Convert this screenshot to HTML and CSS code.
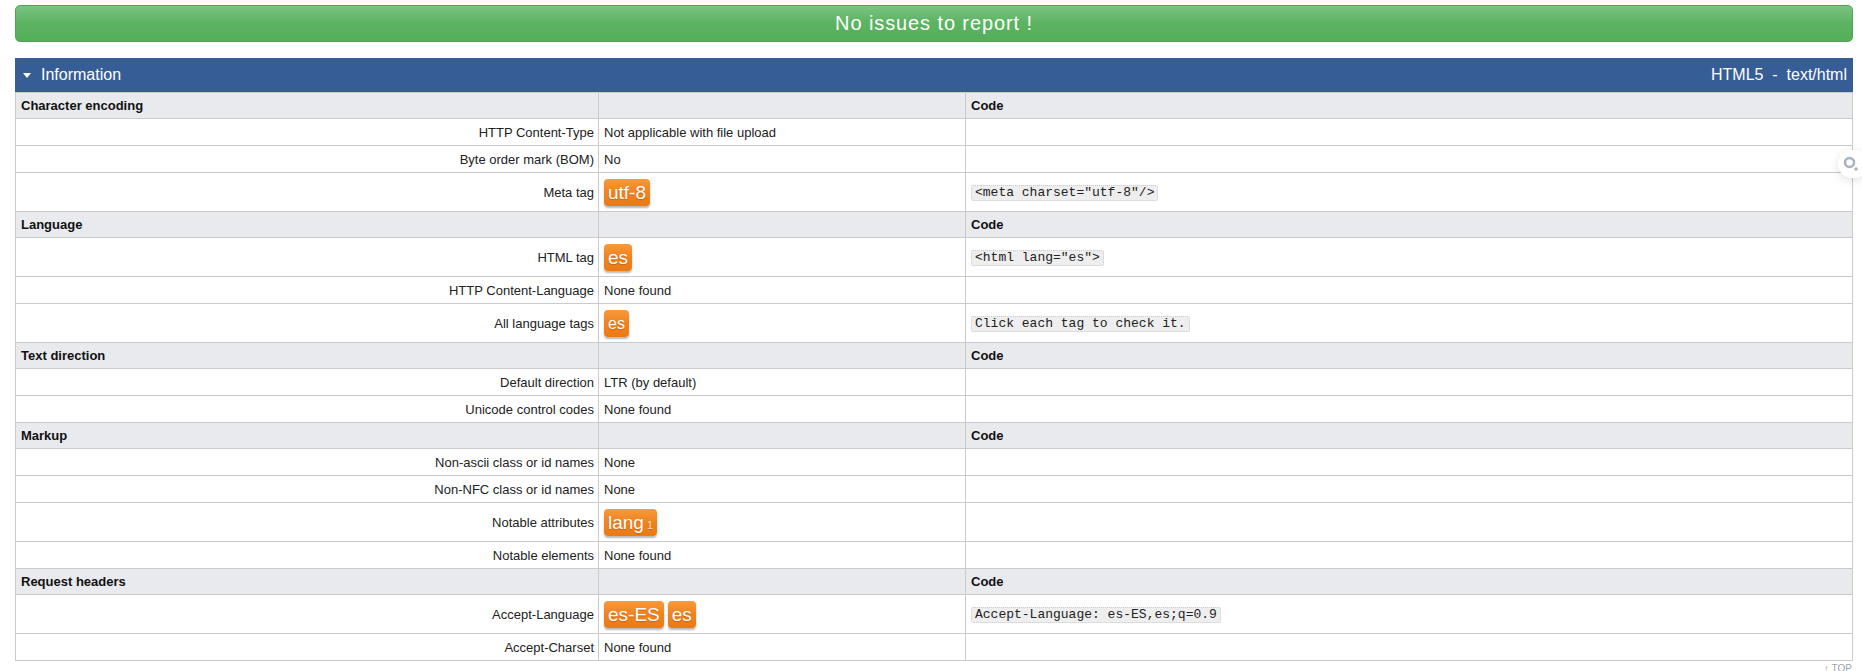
FILE: index.html
```html
<!DOCTYPE html>
<html lang="en">
<head>
<meta charset="utf-8">
<title>Internationalization checker</title>
<link rel="stylesheet" href="styles.css">
</head>
<body>
<div class="page">
  <div class="status">No issues to report !</div>

  <div class="panel-head">
    <span class="panel-title"><span class="caret"></span>Information</span>
    <span class="panel-meta">HTML5 &nbsp;-&nbsp; text/html</span>
  </div>

  <table class="info">
    <colgroup>
      <col class="c-label">
      <col class="c-value">
      <col class="c-code">
    </colgroup>
    <tbody>
      <tr class="sec"><th>Character encoding</th><th></th><th>Code</th></tr>
      <tr><td class="lbl">HTTP Content-Type</td><td>Not applicable with file upload</td><td></td></tr>
      <tr><td class="lbl">Byte order mark (BOM)</td><td>No</td><td></td></tr>
      <tr><td class="lbl">Meta tag</td><td><div class="tags"><span class="tag">utf-8</span></div></td><td><code>&lt;meta charset="utf-8"/&gt;</code></td></tr>

      <tr class="sec"><th>Language</th><th></th><th>Code</th></tr>
      <tr><td class="lbl">HTML tag</td><td><div class="tags"><span class="tag">es</span></div></td><td><code>&lt;html lang="es"&gt;</code></td></tr>
      <tr><td class="lbl">HTTP Content-Language</td><td>None found</td><td></td></tr>
      <tr><td class="lbl">All language tags</td><td><div class="tags"><span class="tag small">es</span></div></td><td><code>Click each tag to check it.</code></td></tr>

      <tr class="sec"><th>Text direction</th><th></th><th>Code</th></tr>
      <tr><td class="lbl">Default direction</td><td>LTR (by default)</td><td></td></tr>
      <tr><td class="lbl">Unicode control codes</td><td>None found</td><td></td></tr>

      <tr class="sec"><th>Markup</th><th></th><th>Code</th></tr>
      <tr><td class="lbl">Non-ascii class or id names</td><td>None</td><td></td></tr>
      <tr><td class="lbl">Non-NFC class or id names</td><td>None</td><td></td></tr>
      <tr><td class="lbl">Notable attributes</td><td><div class="tags"><span class="tag">lang<span class="count">1</span></span></div></td><td></td></tr>
      <tr><td class="lbl">Notable elements</td><td>None found</td><td></td></tr>

      <tr class="sec"><th>Request headers</th><th></th><th>Code</th></tr>
      <tr><td class="lbl">Accept-Language</td><td><div class="tags"><span class="tag">es-ES</span><span class="tag">es</span></div></td><td><code>Accept-Language: es-ES,es;q=0.9</code></td></tr>
      <tr><td class="lbl">Accept-Charset</td><td>None found</td><td></td></tr>
    </tbody>
  </table>

  <div class="totop">&#8593; TOP</div>
</div>

<div class="finder">
  <svg width="16" height="16" viewBox="0 0 16 16" aria-hidden="true">
    <circle cx="6.5" cy="6.5" r="4.5" fill="none" stroke="#a7b2c3" stroke-width="2.6"/>
    <circle cx="13" cy="13" r="1.8" fill="#a7b2c3"/>
  </svg>
</div>
</body>
</html>
```

FILE: styles.css
```css
html, body {
  margin: 0;
  padding: 0;
  background: #ffffff;
}

body {
  font-family: "Liberation Sans", Arial, sans-serif;
  font-size: 13px;
  color: #222222;
}

.page {
  padding: 5px 9px 0 15px;
}

.status {
  height: 35px;
  line-height: 35px;
  border: 1px solid #4fa354;
  border-radius: 5px;
  background: linear-gradient(to bottom, #7bc482 0%, #5db463 45%, #53ae58 100%);
  color: #ffffff;
  text-align: center;
  font-size: 20px;
  letter-spacing: 0.9px;
  margin-bottom: 16px;
}

.panel-head {
  height: 34px;
  background: #365d96;
  color: #ffffff;
  display: flex;
  align-items: center;
  justify-content: space-between;
  padding: 0 6px 0 5px;
  font-size: 16px;
}

.panel-title {
  display: flex;
  align-items: center;
}

.caret {
  display: inline-block;
  width: 0;
  height: 0;
  border-left: 4.5px solid transparent;
  border-right: 4.5px solid transparent;
  border-top: 5px solid #ffffff;
  margin: 1px 10px 0 3px;
}

.info {
  width: 100%;
  border-collapse: collapse;
  table-layout: fixed;
  border: 1px solid #cacaca;
}

.c-label { width: 583px; }
.c-value { width: 367px; }

.info th,
.info td {
  border: 1px solid #cacaca;
  padding: 5px 5px 4px 5px;
  line-height: 16px;
  vertical-align: middle;
  text-align: left;
}

.info td {
  padding-top: 5.5px;
  padding-bottom: 4.5px;
}

.info tr.sec th {
  background: #e9eaee;
  font-weight: bold;
  color: #111111;
}

.info td.lbl {
  text-align: right;
  padding-right: 4px;
}

.tags {
  display: flex;
  gap: 4px;
  padding: 0 0 1px 0;
}

.tag {
  display: inline-block;
  height: 27px;
  line-height: 27px;
  padding: 0 4px;
  border-radius: 4px;
  background: linear-gradient(to bottom, #f69a3a 0%, #f08422 45%, #ec7a12 100%);
  color: #ffffff;
  font-size: 19px;
  text-shadow: 0 1px 1px rgba(120, 50, 0, 0.35);
  box-shadow: 0 2px 2px rgba(0, 0, 0, 0.28);
}

.tag.small {
  font-size: 16px;
  padding: 0 4px;
}

.tag .count {
  font-size: 11px;
  color: #fde6c6;
  margin-left: 3px;
  vertical-align: 0;
}

code {
  display: inline-block;
  font-family: "Liberation Mono", "Courier New", monospace;
  font-size: 13px;
  line-height: 14px;
  padding: 0 3px;
  background: #eeeeee;
  border: 1px dotted #cccccc;
  border-radius: 2px;
  color: #222222;
}

.totop {
  text-align: right;
  font-size: 10px;
  color: #9aa3b0;
  padding: 3px 1px 0 0;
  line-height: 10px;
}

.finder {
  position: fixed;
  top: 150px;
  right: -6px;
  width: 30px;
  height: 28px;
  border-radius: 14px;
  background: #ffffff;
  box-shadow: 0 2px 10px rgba(0, 0, 0, 0.13);
  display: flex;
  align-items: center;
  padding-left: 5px;
  box-sizing: border-box;
}
```
